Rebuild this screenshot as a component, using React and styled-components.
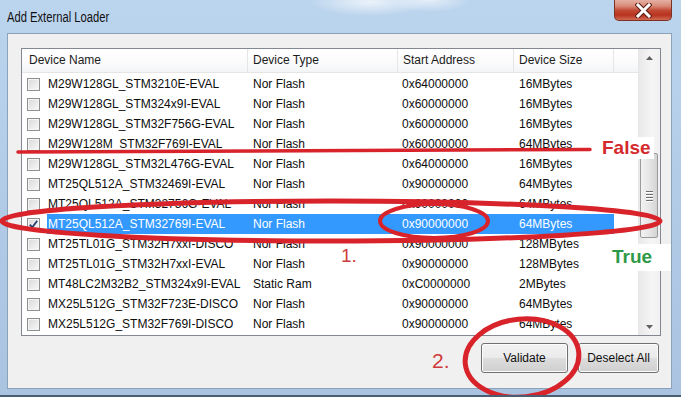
import React from 'react';
import styled, { createGlobalStyle } from 'styled-components';

const devices = [
  ['M29W128GL_STM3210E-EVAL', 'Nor Flash', '0x64000000', '16MBytes'],
  ['M29W128GL_STM324x9I-EVAL', 'Nor Flash', '0x60000000', '16MBytes'],
  ['M29W128GL_STM32F756G-EVAL', 'Nor Flash', '0x60000000', '16MBytes'],
  ['M29W128M_STM32F769I-EVAL', 'Nor Flash', '0x60000000', '64MBytes'],
  ['M29W128GL_STM32L476G-EVAL', 'Nor Flash', '0x64000000', '16MBytes'],
  ['MT25QL512A_STM32469I-EVAL', 'Nor Flash', '0x90000000', '64MBytes'],
  ['MT25QL512A_STM32756G-EVAL', 'Nor Flash', '0x90000000', '64MBytes'],
  ['MT25QL512A_STM32769I-EVAL', 'Nor Flash', '0x90000000', '64MBytes', true],
  ['MT25TL01G_STM32H7xxI-DISCO', 'Nor Flash', '0x90000000', '128MBytes'],
  ['MT25TL01G_STM32H7xxI-EVAL', 'Nor Flash', '0x90000000', '128MBytes'],
  ['MT48LC2M32B2_STM324x9I-EVAL', 'Static Ram', '0xC0000000', '2MBytes'],
  ['MX25L512G_STM32F723E-DISCO', 'Nor Flash', '0x90000000', '64MBytes'],
  ['MX25L512G_STM32F769I-DISCO', 'Nor Flash', '0x90000000', '64MBytes'],
];

const GlobalStyle = createGlobalStyle`
  body {
    margin: 0;
    background: #fff;
    font-family: "Liberation Sans", Arial, sans-serif;
  }
`;

const Window = styled.div`
  position: relative;
  width: 681px;
  height: 397px;
  overflow: hidden;
  display: flex;
  flex-direction: column;
  background:
    radial-gradient(ellipse 60px 14px at 370px 2px, rgba(255,255,255,0.7), transparent),
    radial-gradient(ellipse 40px 12px at 430px 0px, rgba(255,255,255,0.6), transparent),
    linear-gradient(180deg, #bcd5ee 0%, #b3cce8 40%, #a9c3e1 100%);
  border-bottom: 2px solid #4b5d73;
  box-sizing: border-box;
`;

const TitleBar = styled.div`
  height: 33px;
  flex: none;
  display: flex;
  justify-content: space-between;
  align-items: flex-start;
  padding-left: 7px;
`;

const Title = styled.div`
  margin-top: 9px;
  font-size: 14px;
  line-height: 17px;
  color: #111;
  transform: scaleX(0.8);
  transform-origin: left center;
`;

const CloseButton = styled.div`
  width: 58px;
  height: 21px;
  margin-right: 9px;
  box-sizing: border-box;
  border: 1px solid #7d3024;
  border-top: none;
  border-radius: 0 0 5px 5px;
  background: linear-gradient(180deg, #e6b0a4 0%, #d88a78 30%, #c24a34 52%, #b8321f 75%, #d06a52 100%);
  display: flex;
  align-items: center;
  justify-content: center;
`;

const Client = styled.div`
  flex: none;
  height: 356px;
  margin: 0 9px 0 7px;
  box-sizing: border-box;
  border: 1px solid #8ca2ba;
  background: #f0f0f0;
  padding: 14px 12px 0 13px;
  display: flex;
  flex-direction: column;
`;

const ListBox = styled.div`
  width: 640px;
  height: 288px;
  box-sizing: border-box;
  border: 1px solid #828790;
  background: #fff;
  display: flex;
`;

const Table = styled.div`
  flex: 1;
  display: flex;
  flex-direction: column;
`;

const columns = '226px 150px 116px 100px 1fr';

const Header = styled.div`
  display: grid;
  grid-template-columns: ${columns};
  height: 24px;
  box-sizing: border-box;
  border-bottom: 1px solid #e5e5e5;
  background: linear-gradient(180deg, #ffffff 0%, #fbfbfc 60%, #f3f4f6 100%);
`;

const HeadCell = styled.div`
  border-right: 1px solid #e5e5e5;
  padding-left: ${(p) => (p.$first ? 7 : 5)}px;
  font-size: 12px;
  line-height: 23px;
  color: #1a1a1a;
  white-space: nowrap;
  &:last-child {
    border-right: none;
  }
`;

const Body = styled.div`
  padding-top: 1px;
  display: flex;
  flex-direction: column;
`;

const Row = styled.div`
  display: grid;
  grid-template-columns: ${columns};
  height: 20px;
  font-size: 12px;
  line-height: 20px;
  white-space: nowrap;
  color: ${(p) => (p.$selected ? '#fff' : '#0d0d0d')};
`;

const NameCell = styled.div`
  display: flex;
  align-items: center;
  padding-left: 5px;
  gap: 7px;
`;

const NameText = styled.div`
  flex: 1;
  padding-left: 1px;
  background: ${(p) => (p.$selected ? '#3399ff' : 'transparent')};
`;

const Cell = styled.div`
  padding-left: ${(p) => p.$pad || 5}px;
  background: ${(p) => (p.$selected ? '#3399ff' : 'transparent')};
`;

const Box = styled.div`
  width: 13px;
  height: 13px;
  flex: none;
  box-sizing: border-box;
  border: 1px solid #8e8f8f;
  background: linear-gradient(135deg, #d8d8d8 0%, #ececec 60%, #fafafa 100%);
  box-shadow: inset 0 0 0 1px #f4f4f4;
  display: flex;
  align-items: center;
  justify-content: center;
`;

const ScrollBar = styled.div`
  width: 21px;
  flex: none;
  display: flex;
  flex-direction: column;
  border-left: 1px solid #e6e6e6;
  background: linear-gradient(90deg, #e9e9e9 0%, #f5f5f5 60%, #f1f1f1 100%);
`;

const Arrow = styled.div`
  height: 17px;
  flex: none;
  display: flex;
  align-items: center;
  justify-content: center;
`;

const Track = styled.div`
  flex: 1;
`;

const Thumb = styled.div`
  margin: 87px 2px 0 1px;
  height: 85px;
  box-sizing: border-box;
  border: 1px solid #9a9a9a;
  border-radius: 2px;
  background: linear-gradient(90deg, #f2f2f2 0%, #e6e6e6 50%, #d4d4d4 100%);
  display: flex;
  flex-direction: column;
  align-items: center;
  justify-content: center;
  gap: 2px;
`;

const Grip = styled.div`
  width: 7px;
  height: 1px;
  background: #6e6e6e;
  box-shadow: 0 1px 0 #fff;
`;

const ButtonRow = styled.div`
  display: flex;
  justify-content: flex-end;
  align-items: flex-start;
  gap: 10px;
  margin-top: 7px;
`;

const Button = styled.div`
  width: ${(p) => p.$w}px;
  height: 30px;
  box-sizing: border-box;
  border: 1px solid #707070;
  border-radius: 3px;
  background: linear-gradient(180deg, #f2f2f2 0%, #ebebeb 48%, #dddddd 52%, #cfcfcf 100%);
  box-shadow: inset 0 0 0 1px #fcfcfc;
  font-size: 12px;
  color: #111;
  display: flex;
  align-items: center;
  justify-content: center;
  white-space: nowrap;
`;

const Overlay = styled.svg`
  position: absolute;
  left: 0;
  top: 0;
  pointer-events: none;
`;

const Label = styled.div`
  position: absolute;
  left: ${(p) => p.$x}px;
  top: ${(p) => p.$y}px;
  padding: ${(p) => p.$pad || '0'};
  background: ${(p) => p.$bg || 'transparent'};
  color: ${(p) => p.$color};
  font-family: "Liberation Sans", Arial, sans-serif;
  font-size: ${(p) => p.$size}px;
  font-weight: ${(p) => (p.$bold ? 700 : 400)};
  line-height: 1;
  white-space: nowrap;
`;

const CheckMark = () => (
  <svg width="11" height="11" viewBox="0 0 11 11">
    <path d="M1.8 5.6 L4.3 8.4 L9.2 1.8" fill="none" stroke="#25406f" strokeWidth="1.8" />
  </svg>
);

const CloseGlyph = () => (
  <svg width="17" height="15" viewBox="0 0 17 15">
    <path d="M3 2 L14 13 M14 2 L3 13" stroke="#5a1c14" strokeWidth="5" strokeLinecap="square" />
    <path d="M3 2 L14 13 M14 2 L3 13" stroke="#fff" strokeWidth="3" strokeLinecap="square" />
  </svg>
);

const Tri = ({ up }) => (
  <svg width="7" height="4" viewBox="0 0 7 4">
    <path d={up ? 'M0 4 L3.5 0 L7 4 Z' : 'M0 0 L3.5 4 L7 0 Z'} fill="#606060" />
  </svg>
);

const App = () => {
  return (
    <>
      <GlobalStyle />
      <Window>
        <TitleBar>
          <Title>Add External Loader</Title>
          <CloseButton>
            <CloseGlyph />
          </CloseButton>
        </TitleBar>
        <Client>
          <ListBox>
            <Table>
              <Header>
                <HeadCell $first>Device Name</HeadCell>
                <HeadCell>Device Type</HeadCell>
                <HeadCell>Start Address</HeadCell>
                <HeadCell>Device Size</HeadCell>
                <HeadCell />
              </Header>
              <Body>
                {devices.map(([name, type, addr, size, sel]) => (
                  <Row key={name} $selected={sel}>
                    <NameCell>
                      <Box>{sel && <CheckMark />}</Box>
                      <NameText $selected={sel}>{name}</NameText>
                    </NameCell>
                    <Cell $selected={sel}>{type}</Cell>
                    <Cell $selected={sel} $pad={4}>{addr}</Cell>
                    <Cell $selected={sel}>{size}</Cell>
                    <div />
                  </Row>
                ))}
              </Body>
            </Table>
            <ScrollBar>
              <Arrow><Tri up /></Arrow>
              <Track>
                <Thumb>
                  <Grip /><Grip /><Grip /><Grip />
                </Thumb>
              </Track>
              <Arrow><Tri /></Arrow>
            </ScrollBar>
          </ListBox>
          <ButtonRow>
            <Button $w={87}>Validate</Button>
            <Button $w={81}>Deselect All</Button>
          </ButtonRow>
        </Client>

        <Overlay width="681" height="397" viewBox="0 0 681 397">
          <path d="M18 152 L590 149.5" stroke="#d8232b" strokeWidth="3.5" strokeLinecap="round" fill="none" />
          <ellipse cx="331" cy="221" rx="329" ry="20" stroke="#d8232b" strokeWidth="5" fill="none" />
          <ellipse cx="434" cy="221" rx="54" ry="17" stroke="#d8232b" strokeWidth="4" fill="none" />
          <ellipse cx="522" cy="358" rx="57" ry="39" transform="rotate(-6 522 358)" stroke="#d8232b" strokeWidth="5" fill="none" />
        </Overlay>
        <Label $x={598} $y={137} $pad="1px 3px 2px 4px" $bg="#fff" $color="#d42a2e" $size={19} $bold>False</Label>
        <Label $x={601} $y={244} $pad="3px 19px 5px 11px" $bg="#fff" $color="#2e9a48" $size={19} $bold>True</Label>
        <Label $x={341} $y={246} $color="#cf3b3b" $size={19}>1.</Label>
        <Label $x={432} $y={350} $color="#cf3b3b" $size={21}>2.</Label>
      </Window>
    </>
  );
};

export default App;
